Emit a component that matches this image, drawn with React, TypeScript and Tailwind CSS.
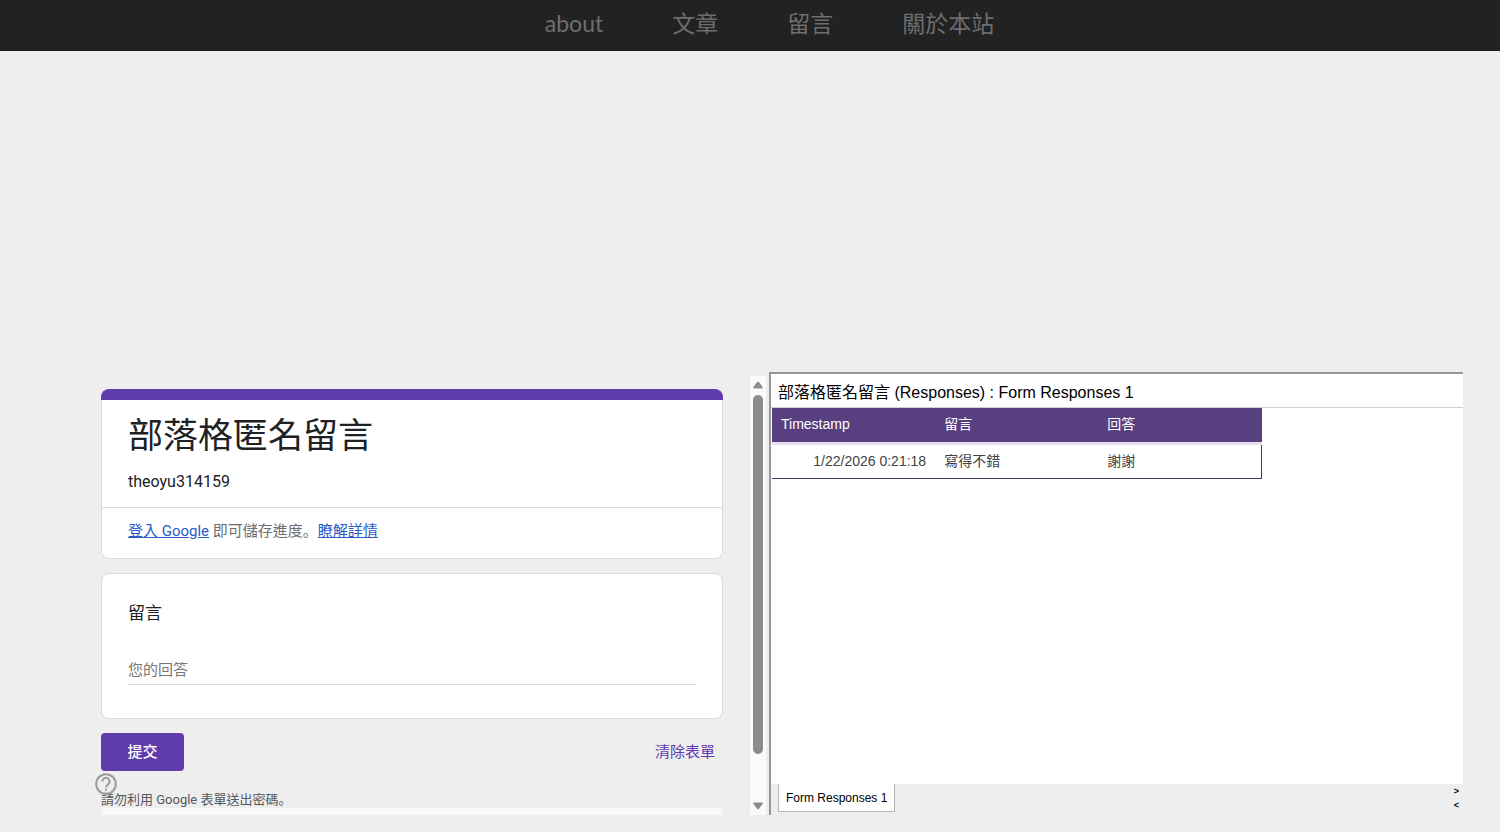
import React from "react";

const navItems = ["about", "文章", "留言", "關於本站"];
const columns = ["Timestamp", "留言", "回答"];
const rows = [["1/22/2026 0:21:18", "寫得不錯", "謝謝"]];

function NavBar() {
  return (
    <nav className="flex h-[51px] justify-center gap-[69px] bg-[#222222] pt-1 pl-[39px] font-['Lato','Noto_Sans_CJK_TC',sans-serif] text-[23px] leading-[38px] text-[#6e6e6e]">
      {navItems.map((item) => (
        <a key={item} href="#">
          {item}
        </a>
      ))}
    </nav>
  );
}

function ScrollBar() {
  return (
    <div className="mt-1 mr-px flex w-4 flex-col items-center bg-[#fafafa] py-[5px]" aria-hidden="true">
      <svg width="12" height="8" viewBox="0 0 12 8" fill="#8b8b8b">
        <path d="M5.2 1.1q.8-.9 1.6 0l3.8 5q.6 1.4-.8 1.4H2.2q-1.4 0-.8-1.4z" />
      </svg>
      <div className="mt-[6px] mb-12 w-[10px] flex-1 rounded-full bg-[#8b8b8b]" />
      <svg width="12" height="8" viewBox="0 0 12 8" fill="#8b8b8b">
        <path d="M5.2 6.9q.8.9 1.6 0l3.8-5q.6-1.4-.8-1.4H2.2q-1.4 0-.8 1.4z" />
      </svg>
    </div>
  );
}

function FullStop() {
  return <span className="font-['Noto_Sans_CJK_SC',sans-serif]">。</span>;
}

function CommentForm() {
  return (
    <section className="flex font-['Roboto','Noto_Sans_CJK_TC',sans-serif] text-[15px] text-[#202124]">
      <form className="flex flex-1 flex-col pt-[17px] pr-[27px] pl-[65px]" onSubmit={(e) => e.preventDefault()}>
        <header className="overflow-hidden rounded-lg">
          <div className="h-[11px] bg-[#5f3bad]" />
          <div className="rounded-b-lg border border-t-0 border-[#dadce0] bg-white">
            <div className="border-b border-[#dadce0] px-[26px] pt-3 pb-[13px]">
              <h1 className="text-[35px] leading-[50px]">部落格匿名留言</h1>
              <p className="mt-2 text-[16px] leading-6">theoyu314159</p>
            </div>
            <p className="h-[50px] px-[26px] pt-[10px] leading-6 text-[#6a6d71]">
              <a href="#" className="text-[#2a5bc7] underline">
                登入 Google
              </a>{" "}
              即可儲存進度
              <FullStop />
              <a href="#" className="text-[#2a5bc7] underline">
                瞭解詳情
              </a>
            </p>
          </div>
        </header>

        <div className="mt-[14px] rounded-lg border border-[#dadce0] bg-white px-[26px] pt-[27px] pb-[33px]">
          <label htmlFor="message" className="block text-[17px] leading-6">
            留言
          </label>
          <input
            id="message"
            type="text"
            placeholder="您的回答"
            className="mt-[30px] block h-[30px] w-full border-b border-[#dadce0] bg-transparent outline-none placeholder:text-[#767676]"
          />
        </div>

        <div className="mt-[14px] flex items-center justify-between">
          <button type="submit" className="h-[38px] w-[83px] rounded bg-[#5f3bad] font-medium text-white">
            提交
          </button>
          <button type="reset" className="px-2 text-[#5f3bad]">
            清除表單
          </button>
        </div>

        <div className="relative mt-5 text-[13px] leading-4 text-[#55585c]">
          <p>
            請勿利用 Google 表單送出密碼
            <FullStop />
          </p>
          <button type="button" aria-label="Help" className="absolute -top-[18px] -left-[6px]">
            <svg width="22" height="22" viewBox="0 0 22 22" fill="none" stroke="#9b9b9b" strokeWidth="2">
              <circle cx="11" cy="11" r="9.8" />
              <path d="M7.4 8.4a3.6 3.6 0 1 1 5.9 2.8c-1.4 1.1-2.3 1.7-2.3 3.2" />
              <path d="M11 15.8v2" />
            </svg>
          </button>
        </div>
        <div className="h-[7px] bg-[#f8f8f8]" />
      </form>
      <ScrollBar />
    </section>
  );
}

function ResponseSheet() {
  return (
    <section className="flex flex-col border-t-2 border-l-2 border-[#969696] font-['Liberation_Sans','Noto_Sans_CJK_TC',sans-serif] text-black">
      <div className="flex-1 bg-white">
        <h2 className="border-b border-[#d0d0d0] px-[7px] pt-1 text-[16px] leading-[29px]">
          部落格匿名留言 (Responses) : Form Responses 1
        </h2>
        <table className="ml-px w-[490px] table-fixed border-collapse text-left text-[14px]">
          <thead>
            <tr className="h-[35px] bg-[#573f80] text-white">
              {columns.map((name) => (
                <th key={name} className="px-[9px] py-0 font-normal">
                  {name}
                </th>
              ))}
            </tr>
          </thead>
          <tbody>
            {rows.map((row) => (
              <tr
                key={row[0]}
                className="h-[35px] border-t-3 border-r border-b border-t-[#e6e1ee] border-r-[#46336e] border-b-[#46336e] text-[#434343]"
              >
                {row.map((cell, i) => (
                  <td key={i} className={i === 0 ? "px-[9px] py-0 text-right" : "px-[9px] py-0"}>
                    {cell}
                  </td>
                ))}
              </tr>
            ))}
          </tbody>
        </table>
      </div>
      <footer className="flex h-[31px] items-start justify-between bg-[#eeeeee] pr-1 pl-[7px]">
        <button type="button" className="h-7 border border-t-0 border-[#b5b5b5] bg-white px-[7px] text-[12px]">
          Form Responses 1
        </button>
        <div className="flex flex-col text-[9px] font-bold">
          <button type="button" className="h-[14px] leading-[10px]" aria-label="Scroll right">
            &gt;
          </button>
          <button type="button" className="h-[14px] leading-[10px]" aria-label="Scroll left">
            &lt;
          </button>
        </div>
      </footer>
    </section>
  );
}

export default function App() {
  return (
    <div className="min-h-screen bg-[#eeeeee]">
      <NavBar />
      <main className="grid grid-cols-[731fr_694fr] gap-[2px] pt-[321px] pr-[37px] pb-4 pl-9">
        <CommentForm />
        <ResponseSheet />
      </main>
    </div>
  );
}
